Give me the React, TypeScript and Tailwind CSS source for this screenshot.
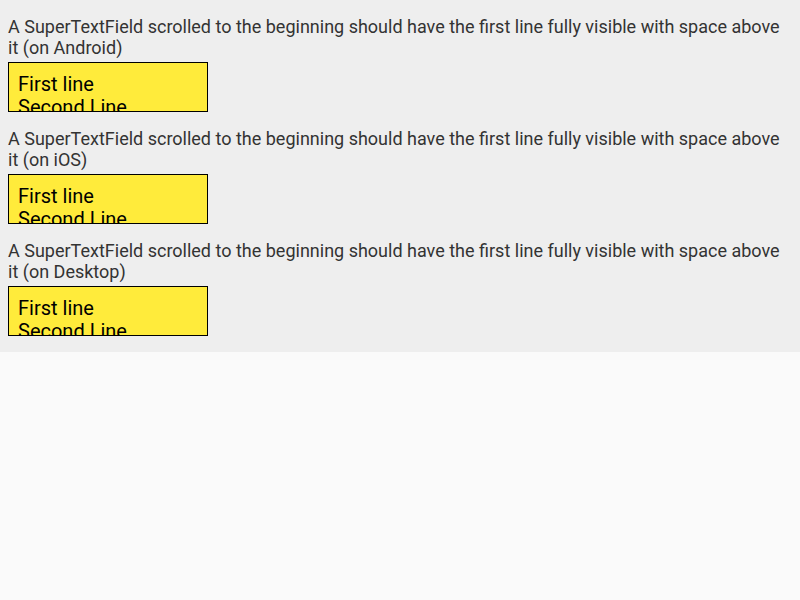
const platforms = ["Android", "iOS", "Desktop"];

function ScrolledField() {
  return (
    <div className="w-[200px] h-[50px] border border-black bg-[#ffeb3b] overflow-hidden pl-[9px] pt-[10px] text-[20px] leading-[23px] text-black">
      <div>First line</div>
      <div>Second Line</div>
    </div>
  );
}

export default function App() {
  return (
    <div className="min-h-[600px] bg-[#fafafa] font-['Roboto',sans-serif]">
      <div className="bg-[#eeeeee] px-2 py-4 flex flex-col gap-4">
        {platforms.map((p) => (
          <div key={p} className="flex flex-col gap-1">
            <p className="text-[18px] leading-[21px] text-[#333333]">
              A SuperTextField scrolled to the beginning should have the first line fully visible with space above it (on {p})
            </p>
            <ScrolledField />
          </div>
        ))}
      </div>
    </div>
  );
}
